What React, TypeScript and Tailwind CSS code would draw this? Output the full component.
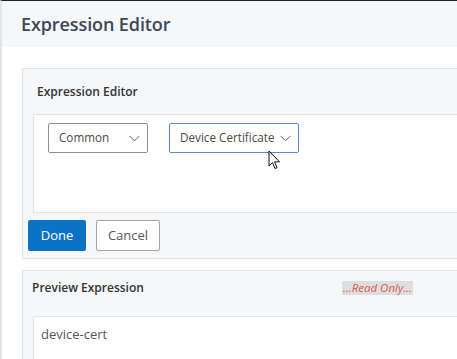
function Chevron() {
  return (
    <svg width="11" height="7" viewBox="0 0 11 7" className="shrink-0">
      <path d="M0.5 0.8 L5.5 5.8 L10.5 0.8" fill="none" stroke="#666" strokeWidth="1" />
    </svg>
  );
}

function Select({ label, width, focused }: { label: string; width: string; focused?: boolean }) {
  return (
    <div
      className={`${width} h-[30px] flex items-center justify-between pl-[10px] pr-[7px] rounded-[2px] bg-white border ${
        focused ? 'border-[#5a88d4]' : 'border-[#8f8f8f]'
      }`}
    >
      <span className="whitespace-nowrap text-[11.7px] text-[#4a4a4a]">{label}</span>
      <Chevron />
    </div>
  );
}

export default function App() {
  return (
    <div
      className="relative w-[457px] h-[359px] overflow-hidden bg-white border-t border-[#1e232b] border-l-2 border-l-[#e4e4e4]"
      style={{ fontFamily: '"Open Sans", "Noto Sans", sans-serif' }}
    >
      <header className="h-[46px] bg-[#f5f7f9] pl-[19px] flex items-center">
        <h1 className="text-[18px] font-semibold text-[#3e4858] tracking-[-0.1px]">Expression Editor</h1>
      </header>

      <div className="pt-[21px] pl-[20px] w-[480px] flex flex-col gap-[11px]">
        {/* Editor panel */}
        <section className="border border-r-0 border-[#e1e4e8] bg-[#f5f7f9] pb-[7px]">
          <div className="h-[45px] pl-[14px] flex items-center">
            <h2 className="text-[12px] font-semibold text-[#333]">Expression Editor</h2>
          </div>
          <div className="ml-[10px] h-[99px] bg-white border border-r-0 border-[#e1e4e8] pt-[8px] pl-[14px] flex items-start gap-[21px]">
            <Select label="Common" width="w-[100px]" />
            <Select label="Device Certificate" width="w-[130px]" focused />
          </div>
          <div className="mt-[7px] ml-[5px] flex gap-[10px]">
            <button className="w-[58px] h-[31px] rounded-[2px] bg-[#0b73c5] text-white text-[13px]">Done</button>
            <button className="w-[64px] h-[31px] rounded-[2px] bg-white border border-[#a3a3a3] text-[#555] text-[13px]">
              Cancel
            </button>
          </div>
        </section>

        {/* Preview panel */}
        <section className="border border-r-0 border-[#e1e4e8] bg-[#f5f7f9]">
          <div className="h-[45px] pl-[9px] pb-[11px] flex items-center">
            <h2 className="w-[310px] text-[12px] font-semibold text-[#333]">Preview Expression</h2>
            <span className="bg-[#dedede] px-[1px] h-[14px] flex items-center text-[11.5px] italic text-[#d65a50]">
              ...Read Only...
            </span>
          </div>
          <div className="ml-[10px] h-[60px] bg-white border border-r-0 border-[#e1e4e8] pl-[7px] pt-[8px]">
            <p className="text-[13px] leading-[18px] text-[#555]">device-cert</p>
          </div>
        </section>
      </div>

      {/* mouse pointer */}
      <svg className="absolute left-[266px] top-[149px]" width="13" height="21" viewBox="0 0 13 21">
        <path d="M1 1 L1 16 L4.5 12.5 L7 18.5 L9 17.7 L6.6 11.8 L11.5 11.8 Z" fill="white" stroke="#111" strokeWidth="1" />
      </svg>
    </div>
  );
}
